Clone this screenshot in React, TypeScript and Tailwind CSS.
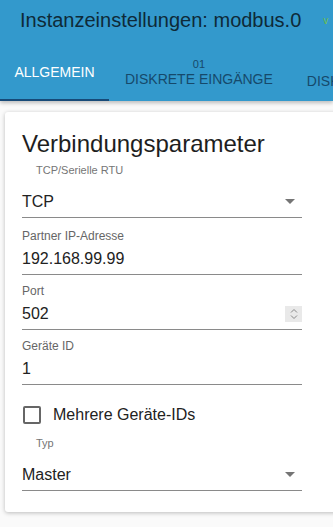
import { useState } from "react";

function SelectField({ label, value }: { label: string; value: string }) {
  return (
    <div className="w-[280px]">
      <div className="pl-[14px] text-[11px] leading-[14px] text-[#757575]">{label}</div>
      <div className="mt-[9px] flex h-[32px] items-center justify-between border-b border-[#8a8a8a]">
        <span className="text-[16px] text-[#222]">{value}</span>
        <svg width="10" height="5" viewBox="0 0 10 5" className="mr-[7px]">
          <path d="M0 0 L10 0 L5 5 Z" fill="#757575" />
        </svg>
      </div>
    </div>
  );
}

function TextField({ label, value, spinner, first }: { label: string; value: string; spinner?: boolean; first?: boolean }) {
  return (
    <div className={`${first ? "mt-[11px]" : "mt-[9px]"} w-[280px]`}>
      <div className="text-[12px] leading-[14px] text-[#666]">{label}</div>
      <div className="flex h-[32px] items-center justify-between border-b border-[#8a8a8a]">
        <span className="text-[16px] text-[#222]">{value}</span>
        {spinner && (
          <div className="flex h-[16px] w-[17px] flex-col items-center justify-center bg-[#e9e9e9]">
            <svg width="8" height="12" viewBox="0 0 8 12">
              <path d="M1 4.5 L4 1.5 L7 4.5 M1 7.5 L4 10.5 L7 7.5" stroke="#888" strokeWidth="1" fill="none" />
            </svg>
          </div>
        )}
      </div>
    </div>
  );
}

export default function App() {
  const [multi, setMulti] = useState(false);

  return (
    <div className="h-[527px] w-[333px] overflow-hidden bg-[#fafafa] font-['Liberation_Sans',Arial,sans-serif]">
      {/* Header */}
      <div className="bg-[#3399cc] shadow-[0_2px_4px_rgba(0,0,0,0.25)]">
        <div className="flex h-[40px] items-center whitespace-nowrap pl-[20px]">
          <span className="text-[20px] text-[#0e2a38]">Instanzeinstellungen: modbus.0</span>
          <span className="ml-[22px] text-[10px] text-[#6fbf4a]">v</span>
        </div>
        <div className="flex h-[61px] items-stretch whitespace-nowrap">
          <div className="relative flex w-[109px] shrink-0 items-center justify-center pt-[3px] text-[14px] text-white">
            ALLGEMEIN
            <div className="absolute bottom-0 left-0 h-[2px] w-full bg-[#174a78]" />
          </div>
          <div className="flex shrink-0 flex-col items-center justify-center px-[16px] pt-[4px] text-[#16496b]">
            <span className="text-[11px] leading-[12px]">01</span>
            <span className="text-[14px] leading-[18px]">DISKRETE EINGÄNGE</span>
          </div>
          <div className="flex shrink-0 items-center pl-[18px] pt-[22px] text-[14px] text-[#16496b]">DISKRETE</div>
        </div>
      </div>

      {/* Card */}
      <div className="ml-[5px] mt-[11px] w-[345px] rounded-[3px] bg-white pb-[21px] pl-[17px] pt-[18px] shadow-[0_1px_4px_rgba(0,0,0,0.25)]">
        <h1 className="text-[24px] leading-[28px] text-[#1e1e1e]">Verbindungsparameter</h1>
        <div className="mt-[5px]">
          <SelectField label="TCP/Serielle RTU" value="TCP" />
        </div>
        <TextField label="Partner IP-Adresse" value="192.168.99.99" first />
        <TextField label="Port" value="502" spinner />
        <TextField label="Geräte ID" value="1" />

        <label className="mt-[18px] flex h-[24px] cursor-pointer items-center">
          <span
            onClick={() => setMulti(!multi)}
            className="ml-[1px] h-[18px] w-[18px] rounded-[2px] border-2 border-[#666]"
          />
          <span className="ml-[12px] text-[16px] text-[#222]">Mehrere Geräte-IDs</span>
        </label>

        <div className="mt-[9px]">
          <SelectField label="Typ" value="Master" />
        </div>
      </div>
    </div>
  );
}
